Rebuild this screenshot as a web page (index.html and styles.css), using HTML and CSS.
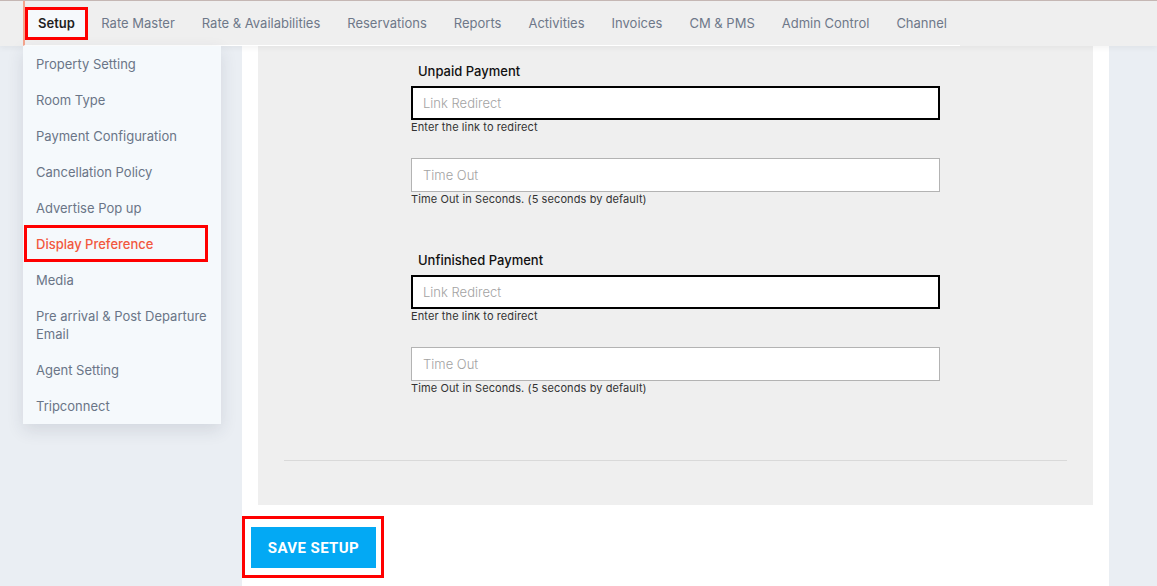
FILE: index.html
```html
<!DOCTYPE html>
<html lang="en">
<head>
<meta charset="utf-8">
<title>Setup - Display Preference</title>
<link rel="stylesheet" href="styles.css">
</head>
<body>
<header class="topbar">
  <nav class="mainnav">
    <ul class="nav-list">
      <li class="nav-item nav-active">Setup</li>
      <li class="nav-item">Rate Master</li>
      <li class="nav-item">Rate &amp; Availabilities</li>
      <li class="nav-item">Reservations</li>
      <li class="nav-item">Reports</li>
      <li class="nav-item">Activities</li>
      <li class="nav-item">Invoices</li>
      <li class="nav-item">CM &amp; PMS</li>
      <li class="nav-item">Admin Control</li>
      <li class="nav-item">Channel</li>
    </ul>
  </nav>
  <ul class="dropdown">
    <li class="drop-item">Property Setting</li>
    <li class="drop-item">Room Type</li>
    <li class="drop-item">Payment Configuration</li>
    <li class="drop-item">Cancellation Policy</li>
    <li class="drop-item">Advertise Pop up</li>
    <li class="drop-item drop-active">Display Preference</li>
    <li class="drop-item">Media</li>
    <li class="drop-item">Pre arrival &amp; Post Departure Email</li>
    <li class="drop-item">Agent Setting</li>
    <li class="drop-item">Tripconnect</li>
  </ul>
</header>

<main class="page">
  <section class="card">
    <div class="panel">
      <div class="form-col">
        <div class="pay-block">
          <label class="label">Unpaid Payment</label>
          <div class="field">
            <input class="input input-dark" type="text" placeholder="Link Redirect">
            <small class="help">Enter the link to redirect</small>
          </div>
          <div class="field">
            <input class="input" type="text" placeholder="Time Out">
            <small class="help">Time Out in Seconds. (5 seconds by default)</small>
          </div>
        </div>
        <div class="pay-block">
          <label class="label">Unfinished Payment</label>
          <div class="field">
            <input class="input input-dark" type="text" placeholder="Link Redirect">
            <small class="help">Enter the link to redirect</small>
          </div>
          <div class="field">
            <input class="input" type="text" placeholder="Time Out">
            <small class="help">Time Out in Seconds. (5 seconds by default)</small>
          </div>
        </div>
      </div>
      <hr class="divider">
    </div>
    <div class="save-wrap">
      <button class="btn-save" type="button">SAVE SETUP</button>
    </div>
  </section>
</main>
</body>
</html>
```

FILE: styles.css
```css
*, *::before, *::after { box-sizing: border-box; }

html, body { margin: 0; padding: 0; }

body {
  background: #eaeef3;
  font-family: "Inter", "Open Sans", sans-serif;
  color: #333;
  min-height: 586px;
  overflow: hidden;
}

ul { list-style: none; margin: 0; padding: 0; }

/* ---------- top bar ---------- */
.topbar {
  position: relative;
  z-index: 5;
  height: 46px;
  background: #efefef;
  border-top: 1px solid #c5b7b4;
  box-shadow: 0 2px 6px rgba(0, 0, 0, 0.05);
}

.mainnav {
  display: inline-block;
  margin-left: 23px;
  border-left: 2px solid #f4a48e;
  border-bottom: 1px solid #ffffff;
}

.nav-list {
  display: flex;
  align-items: center;
  height: 44px;
}

.nav-item {
  padding: 0 13.5px;
  font-size: 13px;
  color: #6e7889;
  white-space: nowrap;
  line-height: 20px;
}

.nav-active {
  height: 33px;
  display: flex;
  align-items: center;
  padding: 0 10px;
  border: 3px solid #ff0000;
  background: #f6f9fc;
  color: #1f1f1f;
  font-weight: 600;
}

/* ---------- dropdown ---------- */
.dropdown {
  position: absolute;
  left: 23px;
  top: 45px;
  width: 198px;
  background: #f5f9fc;
  box-shadow: 0 6px 16px rgba(40, 50, 70, 0.12);
  z-index: 10;
}

.drop-item {
  position: relative;
  padding: 9px 13px;
  font-size: 13px;
  line-height: 18px;
  color: #6a7587;
}

.drop-active {
  color: #f2583e;
  font-weight: 500;
}

.drop-active::after {
  content: "";
  position: absolute;
  left: 1px;
  top: -1px;
  width: 184px;
  height: 37px;
  border: 3px solid #ff0000;
}

/* ---------- main ---------- */
.page {
  margin-left: 242px;
  width: 867px;
}

.card {
  background: #ffffff;
  min-height: 540px;
}

.panel {
  margin: 0 16px;
  background: #efefef;
  padding: 15px 26px 44px;
}

.form-col {
  width: 529px;
  margin: 0 auto;
}

.pay-block + .pay-block { margin-top: 44px; }

.label {
  display: block;
  padding-left: 7px;
  margin-bottom: 5px;
  font-size: 13px;
  line-height: 20px;
  font-weight: 500;
  color: #111;
}

.field + .field { margin-top: 24px; }

.input {
  display: block;
  width: 100%;
  height: 34px;
  margin: 0;
  padding: 0 11px;
  border: 1px solid #b3b3b3;
  background: #ffffff;
  font-family: inherit;
  font-size: 13px;
  color: #333;
  outline: none;
}

.input::placeholder {
  color: #a3a3a3;
  font-weight: 300;
}

.input-dark {
  border: 2px solid #000000;
  padding: 0 10px;
}

.help {
  display: block;
  font-size: 11px;
  line-height: 14px;
  color: #333;
  letter-spacing: 0.1px;
}

.divider {
  margin: 65px 0 0;
  border: 0;
  border-top: 1px solid #d9d9d9;
  height: 0;
}

/* ---------- save button ---------- */
.save-wrap {
  display: inline-block;
  margin-top: 11px;
  padding: 8px 5px 7px 6px;
  border: 3px solid #ff0000;
}

.btn-save {
  display: block;
  width: 125px;
  height: 41px;
  border: 0;
  background: #03a9f4;
  color: #ffffff;
  font-family: "Roboto", "Liberation Sans", sans-serif;
  font-size: 15px;
  font-weight: 700;
  letter-spacing: 0.4px;
  cursor: pointer;
}
```
